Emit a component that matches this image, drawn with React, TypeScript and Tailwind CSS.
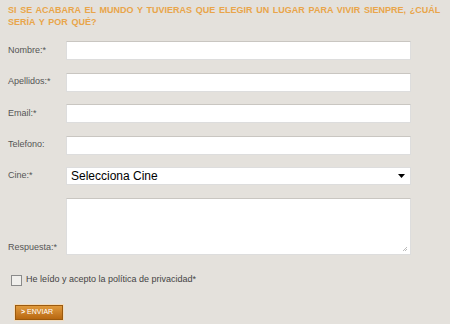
import React from "react";

const rows = [
  {label: "Nombre:*"},
  {label: "Apellidos:*"},
  {label: "Email:*"},
  {label: "Telefono:"},
];

export default function App() {
  return (
    <div className="w-[450px] h-[324px] bg-[#e4e1dc] overflow-hidden font-['Liberation_Sans',Arial,sans-serif]">
      <h1 className="pl-2 pt-[4px] text-[9px] leading-[12px] font-bold whitespace-nowrap [word-spacing:1.2px] text-[#e9a54a]">
        SI SE ACABARA EL MUNDO Y TUVIERAS QUE ELEGIR UN LUGAR PARA VIVIR SIENPRE, ¿CUÁL
        <br />
        SERÍA Y POR QUÉ?
      </h1>
      <form className="mt-[13px] flex flex-col">
        {rows.map((r) => (
          <div key={r.label} className="flex items-center h-[19px] mb-[12.5px]">
            <label className="w-[66px] pl-2 text-[9px] text-[#555]">{r.label}</label>
            <input
              type="text"
              className="w-[345px] h-[19px] bg-white border border-[#ddd] border-t-[#c9c6c1] outline-none"
            />
          </div>
        ))}
        <div className="flex items-center h-[18px] mb-[13px]">
          <label className="w-[66px] pl-2 text-[9px] text-[#555]">Cine:*</label>
          <div className="w-[345px] h-[18px] bg-white border border-[#ddd] flex items-center justify-between pl-[4px] pr-[5px]">
            <span className="text-[12px] text-black">Selecciona Cine</span>
            <svg width="7" height="4" viewBox="0 0 7 4">
              <path d="M0 0h7L3.5 4z" fill="#000" />
            </svg>
          </div>
        </div>
        <div className="flex items-end h-[57px] mb-[18px]">
          <label className="w-[66px] pl-2 text-[9px] text-[#555] mb-[1px]">Respuesta:*</label>
          <div className="relative w-[345px] h-[57px] bg-white border border-[#ddd] border-t-[#c9c6c1]">
            <svg className="absolute right-[2px] bottom-[2px]" width="6" height="6" viewBox="0 0 6 6">
              <path d="M5 1L1 5M5 3L3 5" stroke="#aaa" strokeWidth="0.8" />
            </svg>
          </div>
        </div>
        <div className="flex items-center pl-[11px] h-[14px]">
          <span className="w-[11px] h-[11px] bg-[#f0efec] border border-[#8a8a8a] mr-[4px]" />
          <span className="text-[9px] text-[#444]">He leído y acepto la política de privacidad*</span>
        </div>
        <div className="pl-[15px] mt-[18px]">
          <button
            type="button"
            className="w-[48px] h-[15px] flex items-center gap-[2px] pl-[5px] text-[7px] text-white bg-gradient-to-b from-[#e09a3c] to-[#b8680f] border border-[#9a5a10] shadow-[0_0_0_1px_#f3dcbc]"
          >
            <span className="font-bold text-[7px]">&gt;</span>ENVIAR
          </button>
        </div>
      </form>
    </div>
  );
}
